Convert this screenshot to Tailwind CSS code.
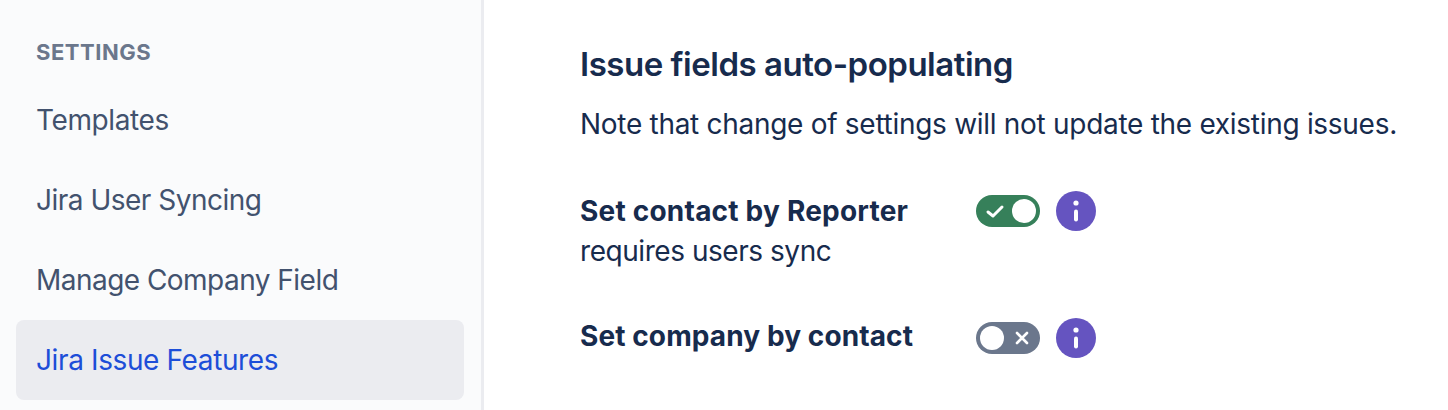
<!DOCTYPE html>
<html>
<head>
<meta charset="utf-8">
<script src="https://cdn.jsdelivr.net/npm/@tailwindcss/browser@4"></script>
</head>
<body class="bg-white font-['Inter',sans-serif] overflow-hidden">
<div class="flex h-[410px] w-[1448px]">
  <aside class="w-[484px] h-full shrink-0 bg-[#fafbfc] border-r-[3px] border-[#ebecf0] pl-4 pr-[17px] pt-10">
    <div class="pl-5 text-[22px] leading-6 font-bold tracking-[0.54px] text-[#6b778c]">SETTINGS</div>
    <nav class="mt-4 flex flex-col text-[28px] text-[#42526e]">
      <a class="h-20 flex items-center pl-5 rounded-lg tracking-[-0.38px]">Templates</a>
      <a class="h-20 flex items-center pl-5 rounded-lg tracking-[-0.5px]">Jira User Syncing</a>
      <a class="h-20 flex items-center pl-5 rounded-lg tracking-[-0.53px]">Manage Company Field</a>
      <a class="h-20 flex items-center pl-5 rounded-lg tracking-[-0.38px] bg-[#ebecf0] text-[#1d4ed8]">Jira Issue Features</a>
    </nav>
  </aside>
  <main class="pl-24 pt-10 text-[#172b4d]">
    <h2 class="text-[33px] leading-12 font-semibold tracking-[-0.48px]">Issue fields auto-populating</h2>
    <p class="mt-4 text-[28px] leading-10 tracking-[-0.29px]">Note that change of settings will not update the existing issues.</p>
    <div class="mt-[47px] flex items-start">
      <div class="w-[396px] text-[28px] leading-10">
        <div class="font-bold tracking-[0.22px]">Set contact by Reporter</div>
        <div class="tracking-[-0.45px]">requires users sync</div>
      </div>
      <div class="flex items-center gap-4 h-10">
        <span class="relative block w-16 h-8 rounded-full bg-[#36805a]">
          <svg class="absolute left-0 top-0" width="64" height="32" viewBox="0 0 64 32" fill="none" stroke="#fff" stroke-width="3" stroke-linecap="round" stroke-linejoin="round"><path d="M12 17 L17 21 L26 12"/></svg>
          <span class="absolute right-[4px] top-[4px] w-6 h-6 rounded-full bg-white"></span>
        </span>
        <span class="w-10 h-10 rounded-full bg-[#6554c0] flex items-center justify-center">
          <svg width="8" height="24" viewBox="0 0 8 24" fill="#fff"><circle cx="4" cy="4" r="2.6"/><rect x="2" y="10.5" width="4" height="12" rx="2"/></svg>
        </span>
      </div>
    </div>
    <div class="mt-[45px] flex items-start">
      <div class="w-[396px] text-[28px] leading-10 font-bold tracking-[0.1px]">Set company by contact</div>
      <div class="flex items-center gap-4 h-10 mt-[2px]">
        <span class="relative block w-16 h-8 rounded-full bg-[#6b778c]">
          <span class="absolute left-[4px] top-[4px] w-6 h-6 rounded-full bg-white"></span>
          <svg class="absolute right-[10px] top-[8px]" width="16" height="16" viewBox="0 0 16 16" fill="none" stroke="#fff" stroke-width="2.6" stroke-linecap="round"><path d="M3 3 L13 13 M13 3 L3 13"/></svg>
        </span>
        <span class="w-10 h-10 rounded-full bg-[#6554c0] flex items-center justify-center">
          <svg width="8" height="24" viewBox="0 0 8 24" fill="#fff"><circle cx="4" cy="4" r="2.6"/><rect x="2" y="10.5" width="4" height="12" rx="2"/></svg>
        </span>
      </div>
    </div>
  </main>
</div>
</body>
</html>
